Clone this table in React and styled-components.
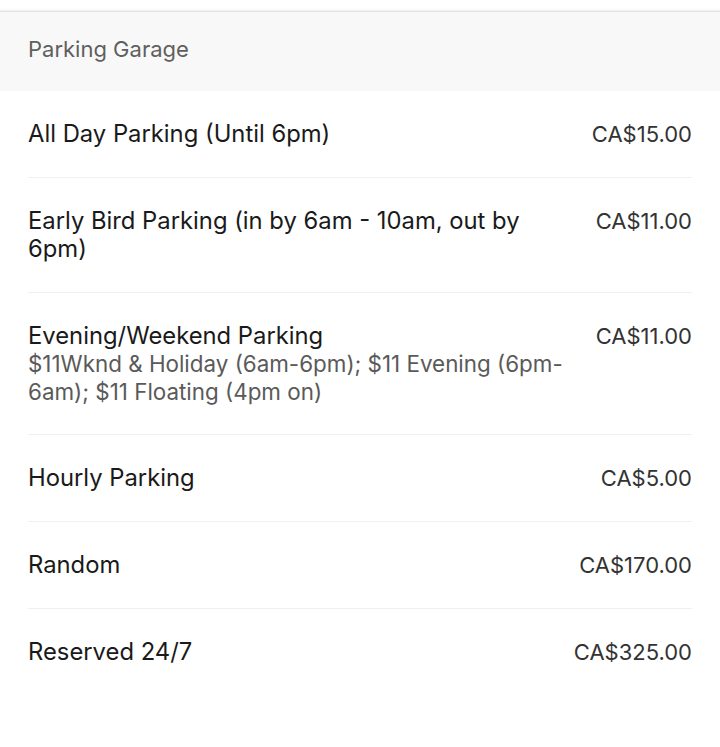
import styled, { createGlobalStyle } from 'styled-components'

const GlobalStyle = createGlobalStyle`
  html, body {
    margin: 0;
    padding: 0;
    background: #fff;
  }
  body {
    font-family: Inter, Roboto, "Liberation Sans", sans-serif;
    -webkit-font-smoothing: antialiased;
  }
`

const Page = styled.div`
  width: 720px;
  min-height: 747px;
  padding-top: 11px;
  background: #fff;
`

const Header = styled.div`
  height: 80px;
  display: flex;
  align-items: center;
  padding: 0 28px 6px;
  box-sizing: border-box;
  background: #f8f8f8;
  border-top: 1px solid #e2e2e2;
  box-shadow: 0 -1px 2px rgba(0, 0, 0, 0.08);
  color: #5f5f5f;
  font-size: 22px;
`

const List = styled.div`
  padding: 0 28px;
`

const Row = styled.div`
  display: flex;
  justify-content: space-between;
  align-items: flex-start;
  gap: 18px;
  padding: 29px 0;
  border-bottom: ${(p) => (p.$last ? 'none' : '1px solid #f0f0f0')};
`

const Info = styled.div`
  flex: 1;
  min-width: 0;
  max-width: 548px;
`

const Title = styled.div`
  font-size: 23.8px;
  line-height: 28px;
  color: #1a1a1a;
`

const Note = styled.div`
  font-size: 22.4px;
  line-height: 27.5px;
  color: #5a5a5a;
`

const Price = styled.div`
  flex-shrink: 0;
  font-size: 22px;
  line-height: 28px;
  color: #333;
`

const rates = [
  { name: 'All Day Parking (Until 6pm)', price: 'CA$15.00' },
  { name: 'Early Bird Parking (in by 6am - 10am, out by 6pm)', price: 'CA$11.00' },
  {
    name: 'Evening/Weekend Parking',
    note: '$11Wknd & Holiday (6am-6pm); $11 Evening (6pm-6am); $11 Floating (4pm on)',
    price: 'CA$11.00',
  },
  { name: 'Hourly Parking', price: 'CA$5.00' },
  { name: 'Random', price: 'CA$170.00' },
  { name: 'Reserved 24/7', price: 'CA$325.00' },
]

const App = () => {
  return (
    <Page>
      <GlobalStyle />
      <Header>Parking Garage</Header>
      <List>
        {rates.map((r, i) => (
          <Row key={r.name} $last={i === rates.length - 1}>
            <Info>
              <Title>{r.name}</Title>
              {r.note && <Note>{r.note}</Note>}
            </Info>
            <Price>{r.price}</Price>
          </Row>
        ))}
      </List>
    </Page>
  )
}

export default App
